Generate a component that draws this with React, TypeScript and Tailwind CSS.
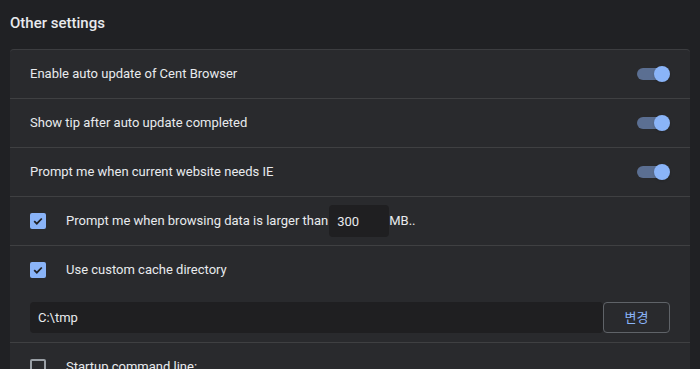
import React, { useState } from 'react';

const FONT = { fontFamily: 'Roboto, "Noto Sans CJK KR", sans-serif' };

function Toggle({ on }: { on: boolean }) {
  return (
    <div className="relative w-[34px] h-[16px] flex items-center">
      <div className={`h-[12px] w-[26px] rounded-full ml-[1px] ${on ? 'bg-[#5b6f92]' : 'bg-[#5f6368]'}`} />
      <div
        className={`absolute top-0 h-[16px] w-[16px] rounded-full shadow ${
          on ? 'left-[18px] bg-[#8ab4f8]' : 'left-0 bg-[#bdc1c6]'
        }`}
      />
    </div>
  );
}

function Checkbox({ checked }: { checked: boolean }) {
  return checked ? (
    <div className="w-4 h-4 rounded-[2px] bg-[#8ab4f8] flex items-center justify-center shrink-0">
      <svg width="12" height="12" viewBox="0 0 12 12">
        <path d="M2.2 6.2 L4.8 8.7 L9.8 3.5" fill="none" stroke="#202124" strokeWidth="1.8" />
      </svg>
    </div>
  ) : (
    <div className="w-4 h-4 rounded-[2px] border-2 border-[#9aa0a6] shrink-0" />
  );
}

const TOGGLES = [
  'Enable auto update of Cent Browser',
  'Show tip after auto update completed',
  'Prompt me when current website needs IE',
];

export default function App() {
  const [size, setSize] = useState('300');
  const [dir, setDir] = useState('C:\\tmp');

  return (
    <div className="w-[700px] h-[369px] overflow-hidden bg-[#202124] text-[#e8eaed]" style={FONT}>
      <div className="h-[49px] px-[10px] pt-[12px] text-[15px] font-medium">Other settings</div>
      <div className="mx-[10px] rounded-t-[4px] bg-[#292a2d]">
        {TOGGLES.map((label, i) => (
          <div
            key={label}
            className={`h-[49px] px-5 flex items-center justify-between text-[13px] border-t ${
              i > 0 ? 'border-[#3f4042]' : 'border-[#3c3d40] rounded-t-[4px]'
            }`}
          >
            <span>{label}</span>
            <Toggle on={true} />
          </div>
        ))}

        <div className="h-[49px] px-5 flex items-center border-t border-[#3f4042] text-[13px]">
          <Checkbox checked={true} />
          <span className="ml-5">Prompt me when browsing data is larger than</span>
          <input
            value={size}
            onChange={(e) => setSize(e.target.value)}
            className="ml-[1px] w-[60px] h-8 rounded-[4px] bg-[#1f1f21] px-2 text-[13px] text-[#e8eaed] outline-none"
          />
          <span>MB..</span>
        </div>

        <div className="border-t border-[#3f4042]">
          <div className="h-[48px] px-5 flex items-center text-[13px]">
            <Checkbox checked={true} />
            <span className="ml-5">Use custom cache directory</span>
          </div>
          <div className="flex px-5 pt-[8px] pb-[9px]">
            <input
              value={dir}
              onChange={(e) => setDir(e.target.value)}
              className="flex-1 h-[31px] rounded-[4px] bg-[#1f1f21] px-2 text-[13px] text-[#e8eaed] outline-none"
            />
            <button className="w-[67px] h-[31px] rounded-[4px] border border-[#5f6368] text-[#8ab4f8] text-[13px]">
              변경
            </button>
          </div>
        </div>

        <div className="h-[49px] px-5 flex items-center border-t border-[#3f4042] text-[13px]">
          <Checkbox checked={false} />
          <span className="ml-5">Startup command line:</span>
        </div>
      </div>
    </div>
  );
}
